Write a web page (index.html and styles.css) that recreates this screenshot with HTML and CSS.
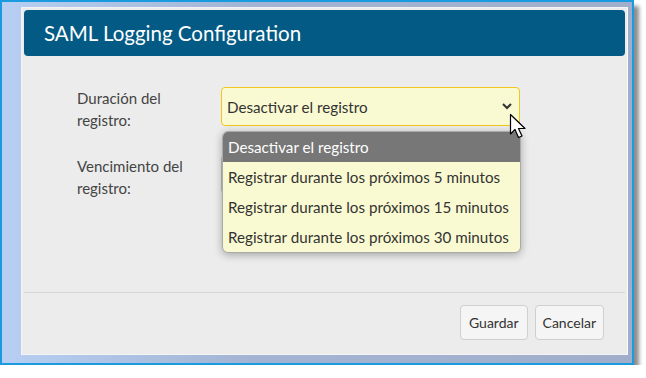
FILE: index.html
```html
<!DOCTYPE html>
<html lang="es">
<head>
    <meta charset="UTF-8">
    <meta name="viewport" content="width=device-width, initial-scale=1.0">
    <title>SAML Logging Configuration</title>
    <link rel="stylesheet" href="styles.css">
</head>
<body>
    <div class="frame">
        <div class="dialog">
            <div class="dialog-header">SAML Logging Configuration</div>

            <div class="dialog-body">
                <div class="row">
                    <label class="label">Duración del registro:</label>
                    <div class="field">
                        <div class="select">
                            <span>Desactivar el registro</span>
                            <svg class="chevron" width="12" height="8" viewBox="0 0 12 8">
                                <path d="M2 2 L6 6 L10 2" fill="none" stroke="#333" stroke-width="2"/>
                            </svg>
                        </div>
                        <ul class="dropdown">
                            <li class="selected">Desactivar el registro</li>
                            <li>Registrar durante los próximos 5 minutos</li>
                            <li>Registrar durante los próximos 15 minutos</li>
                            <li>Registrar durante los próximos 30 minutos</li>
                        </ul>
                        <svg class="cursor" width="22" height="28" viewBox="0 0 22 28">
                            <path d="M1.5 1.5 L1.5 21 L6 16.5 L9.5 24.5 L13 23 L9.5 15.5 L16 15.5 Z" fill="#fff" stroke="#000" stroke-width="1.2" stroke-linejoin="round"/>
                        </svg>
                    </div>
                </div>
                <div class="row">
                    <label class="label">Vencimiento del registro:</label>
                    <div class="field">
                        <div class="select hidden-select"></div>
                    </div>
                </div>
            </div>

            <div class="dialog-footer">
                <button class="btn">Guardar</button>
                <button class="btn">Cancelar</button>
            </div>
        </div>
    </div>
</body>
</html>
```

FILE: styles.css
```css
body {
    margin: 0;
    background: #fff;
    font-family: Lato, "Noto Sans", sans-serif;
}
.frame {
    width: 634px;
    height: 365px;
    box-sizing: border-box;
    border: 2px solid #1a9be0;
    background: linear-gradient(to right, #b7cff3 0%, #a3b4d2 40%, #a0aecb 100%);
    box-shadow: 5px 6px 4px rgba(0, 0, 0, 0.45);
    padding: 5px 4px 0 19px;
}
.dialog {
    width: 607px;
    height: 348px;
    box-sizing: border-box;
    background: #ececec;
    border: 1px solid #f4f4f4;
    border-right-color: #fafafa;
    padding: 2px 2px 0 2px;
    display: flex;
    flex-direction: column;
}
.dialog-header {
    height: 46px;
    background: #035a85;
    border-radius: 4px;
    color: #fff;
    font-size: 20.5px;
    line-height: 46px;
    padding-left: 20px;
}
.dialog-body {
    padding: 31px 0 0 53px;
    flex: 1;
}
.row {
    display: grid;
    grid-template-columns: 144px 299px;
    margin-bottom: 24px;
}
.label {
    font-size: 15px;
    line-height: 22px;
    color: #444;
    padding-top: 0;
    padding-right: 30px;
}
.field {
    position: relative;
}
.select {
    height: 39px;
    box-sizing: border-box;
    background: #fafad2;
    border: 1px solid #f2c61f;
    border-radius: 4px;
    display: flex;
    align-items: center;
    justify-content: space-between;
    padding: 0 6px 0 5px;
    font-size: 15.2px;
    color: #333;
}
.hidden-select {
    border-color: #bbb;
}
.chevron {
    margin-top: -2px;
}
.dropdown {
    position: absolute;
    z-index: 2;
    top: 44px;
    left: 1px;
    width: 297px;
    margin: 0;
    padding: 0;
    list-style: none;
    background: #fafad2;
    border: 1px solid #aaa;
    border-radius: 6px;
    overflow: hidden;
    box-shadow: 0 2px 8px rgba(0, 0, 0, 0.3);
    font-size: 15.2px;
    color: #333;
}
.dropdown li {
    height: 30px;
    line-height: 30px;
    padding-left: 5px;
    white-space: nowrap;
}
.dropdown li.selected {
    background: #777;
    color: #fff;
}
.cursor {
    position: absolute;
    z-index: 3;
    left: 288px;
    top: 26px;
}
.dialog-footer {
    border-top: 1px solid #d6d6d6;
    height: 62px;
    display: flex;
    justify-content: flex-end;
    align-items: flex-start;
    gap: 7px;
    padding: 12px 21px 0 0;
    box-sizing: border-box;
}
.btn {
    height: 35px;
    padding: 0 7px;
    background: #f5f5f5;
    border: 1px solid #cfcfcf;
    border-radius: 4px;
    font-family: Lato, sans-serif;
    font-size: 14px;
    color: #333;
}
.btn:first-child {
    padding: 0 8px;
}
```
